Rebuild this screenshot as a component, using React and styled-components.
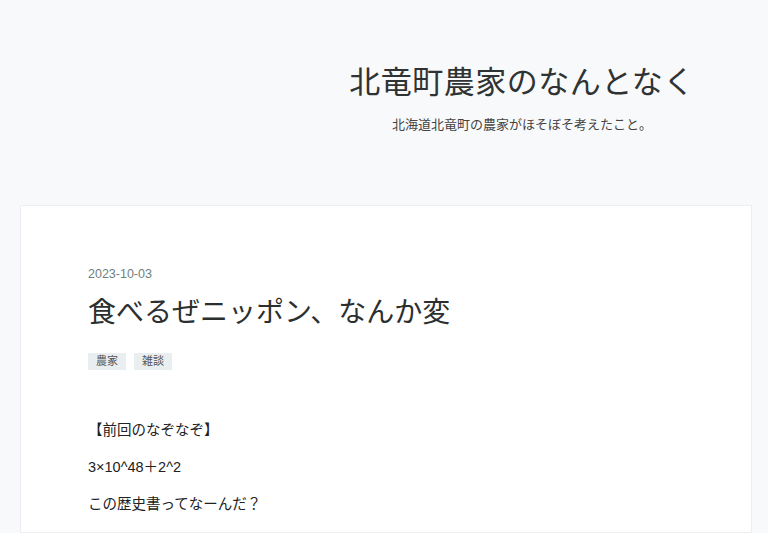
import React from "react";
import styled, { createGlobalStyle } from "styled-components";

const GlobalStyle = createGlobalStyle`
  html, body {
    margin: 0;
    padding: 0;
    background: #f8f9fa;
  }
  body {
    font-family: "Liberation Sans", "Noto Sans CJK JP", sans-serif;
    color: #333;
  }
`;

const App = () => {
  return (
    <>
      <GlobalStyle />
      <Page>
        <Header>
          <SiteTitle>北竜町農家のなんとなく</SiteTitle>
          <SiteDescription>北海道北竜町の農家がほそぼそ考えたこと。</SiteDescription>
        </Header>
        <Card>
          <PostDate>2023-10-03</PostDate>
          <PostTitle>食べるぜニッポン、なんか変</PostTitle>
          <Tags>
            <Tag>農家</Tag>
            <Tag>雑談</Tag>
          </Tags>
          <Body>
            <p>【前回のなぞなぞ】</p>
            <p>3×10^48＋2^2</p>
            <p>この歴史書ってなーんだ？</p>
          </Body>
        </Card>
      </Page>
    </>
  );
};

export default App;

const Page = styled.div`
  display: flex;
  flex-direction: column;
  padding: 0 16px 0 20px;
  height: 533px;
  overflow: hidden;
`;

const Header = styled.header`
  display: flex;
  flex-direction: column;
  align-items: center;
  flex-shrink: 0;
  padding: 63px 0 0 272px;
  height: 205px;
  box-sizing: border-box;
`;

const SiteTitle = styled.h1`
  margin: 0;
  font-family: "Liberation Serif", "Noto Sans CJK JP", serif;
  font-weight: 400;
  font-size: 31px;
  line-height: 40px;
  color: #2f3333;
  letter-spacing: 0.5px;
`;

const SiteDescription = styled.p`
  margin: 14px 0 0;
  font-size: 13px;
  line-height: 16px;
  color: #444;
`;

const Card = styled.article`
  background: #fff;
  border: 1px solid #eceef1;
  padding: 59px 67px 0;
  flex: 1;
`;

const PostDate = styled.div`
  font-size: 12.5px;
  line-height: 18px;
  color: #6e7f7e;
`;

const PostTitle = styled.h2`
  margin: 12px 0 0;
  font-family: "Liberation Serif", "Noto Sans CJK JP", serif;
  font-weight: 400;
  font-size: 28px;
  line-height: 36px;
  color: #2b2f2f;
`;

const Tags = styled.div`
  display: flex;
  gap: 8px;
  margin-top: 22px;
`;

const Tag = styled.span`
  background: #e9eff0;
  color: #555;
  font-size: 11px;
  line-height: 17px;
  padding: 0 8px;
`;

const Body = styled.div`
  margin-top: 49px;
  font-size: 14.5px;
  line-height: 22px;
  color: #222;

  p {
    margin: 0 0 15px;
  }
`;
